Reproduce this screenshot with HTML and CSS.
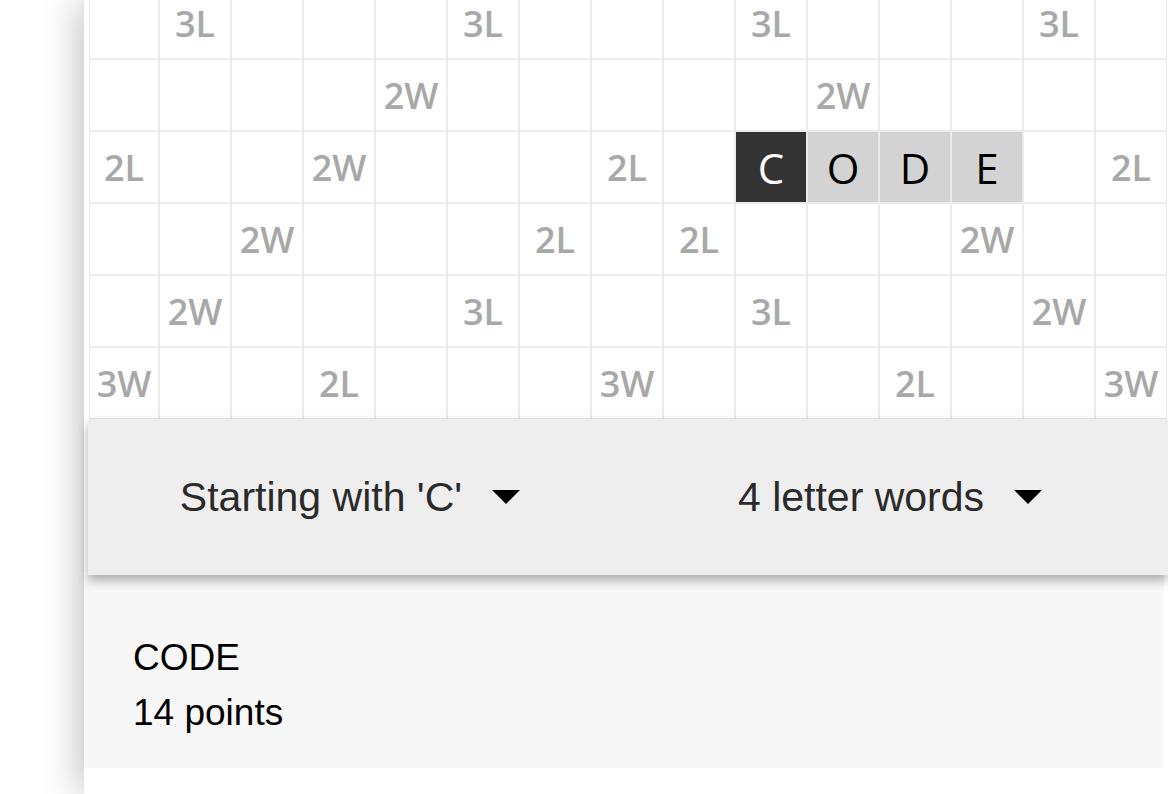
FILE: index.html
```html
<!DOCTYPE html>
<html>
<head>
<meta charset="utf-8">
<title>Word board</title>
<link rel="stylesheet" href="styles.css">
</head>
<body>
<div class="card">
  <div class="board-view">
    <div class="board">
      <div class="cell"></div><div class="cell">3L</div><div class="cell"></div><div class="cell"></div><div class="cell"></div><div class="cell">3L</div><div class="cell"></div><div class="cell"></div><div class="cell"></div><div class="cell">3L</div><div class="cell"></div><div class="cell"></div><div class="cell"></div><div class="cell">3L</div><div class="cell"></div>
      <div class="cell"></div><div class="cell"></div><div class="cell"></div><div class="cell"></div><div class="cell">2W</div><div class="cell"></div><div class="cell"></div><div class="cell"></div><div class="cell"></div><div class="cell"></div><div class="cell">2W</div><div class="cell"></div><div class="cell"></div><div class="cell"></div><div class="cell"></div>
      <div class="cell">2L</div><div class="cell"></div><div class="cell"></div><div class="cell">2W</div><div class="cell"></div><div class="cell"></div><div class="cell"></div><div class="cell">2L</div><div class="cell"></div><div class="cell tile tile-first">C</div><div class="cell tile">O</div><div class="cell tile">D</div><div class="cell tile">E</div><div class="cell"></div><div class="cell">2L</div>
      <div class="cell"></div><div class="cell"></div><div class="cell">2W</div><div class="cell"></div><div class="cell"></div><div class="cell"></div><div class="cell">2L</div><div class="cell"></div><div class="cell">2L</div><div class="cell"></div><div class="cell"></div><div class="cell"></div><div class="cell">2W</div><div class="cell"></div><div class="cell"></div>
      <div class="cell"></div><div class="cell">2W</div><div class="cell"></div><div class="cell"></div><div class="cell"></div><div class="cell">3L</div><div class="cell"></div><div class="cell"></div><div class="cell"></div><div class="cell">3L</div><div class="cell"></div><div class="cell"></div><div class="cell"></div><div class="cell">2W</div><div class="cell"></div>
      <div class="cell">3W</div><div class="cell"></div><div class="cell"></div><div class="cell">2L</div><div class="cell"></div><div class="cell"></div><div class="cell"></div><div class="cell">3W</div><div class="cell"></div><div class="cell"></div><div class="cell"></div><div class="cell">2L</div><div class="cell"></div><div class="cell"></div><div class="cell">3W</div>
    </div>
  </div>
  <div class="toolbar">
    <div class="filter"><span class="filter-label">Starting with 'C'</span><span class="caret"></span></div>
    <div class="filter"><span class="filter-label">4 letter words</span><span class="caret"></span></div>
  </div>
  <div class="results">
    <div class="result-word">CODE</div>
    <div class="result-points">14 points</div>
  </div>
</div>
</body>
</html>
```
FILE: styles.css
```css
html, body {
  margin: 0;
  height: 794px;
  overflow: hidden;
  background: #ffffff;
}

.card {
  margin-left: 84px;
  width: 1090px;
  height: 794px;
  background: #ffffff;
  box-shadow: 0 0 40px rgba(0, 0, 0, 0.3);
}

.board-view {
  height: 419px;
  overflow: hidden;
  display: flex;
  flex-direction: column;
  justify-content: flex-end;
  padding-left: 5px;
}

.board {
  display: grid;
  grid-template-columns: 70px repeat(14, 72px);
  grid-auto-rows: 72px;
}

.cell {
  box-sizing: border-box;
  border: 1px solid #ebebeb;
  display: flex;
  align-items: center;
  justify-content: center;
  font-family: "Open Sans", "DejaVu Sans", sans-serif;
  font-size: 36px;
  font-weight: 600;
  color: #a8a8a8;
}

.tile {
  background: #d3d3d3;
  color: #000000;
  font-size: 42px;
  font-weight: 400;
}

.tile-first {
  background: #333333;
  color: #ffffff;
}

.toolbar {
  position: relative;
  z-index: 1;
  margin-left: 4px;
  width: 1080px;
  height: 156px;
  background: #eeeeee;
  display: flex;
  box-shadow: 0 5px 10px rgba(0, 0, 0, 0.32);
}

.filter {
  flex: 1;
  display: flex;
  align-items: center;
  justify-content: center;
}

.filter-label {
  font-family: "Liberation Sans", Arial, sans-serif;
  font-size: 41px;
  color: #2a2a2a;
}

.caret {
  width: 0;
  height: 0;
  border-left: 14px solid transparent;
  border-right: 14px solid transparent;
  border-top: 14px solid #000000;
  margin-left: 30px;
  margin-right: 16px;
}

.results {
  box-sizing: border-box;
  width: 1080px;
  background: #f7f7f7;
  padding: 55px 49px 28px;
}

.result-word,
.result-points {
  font-family: "Liberation Sans", Arial, sans-serif;
  font-size: 37px;
  line-height: 55px;
  color: #000000;
}
```
